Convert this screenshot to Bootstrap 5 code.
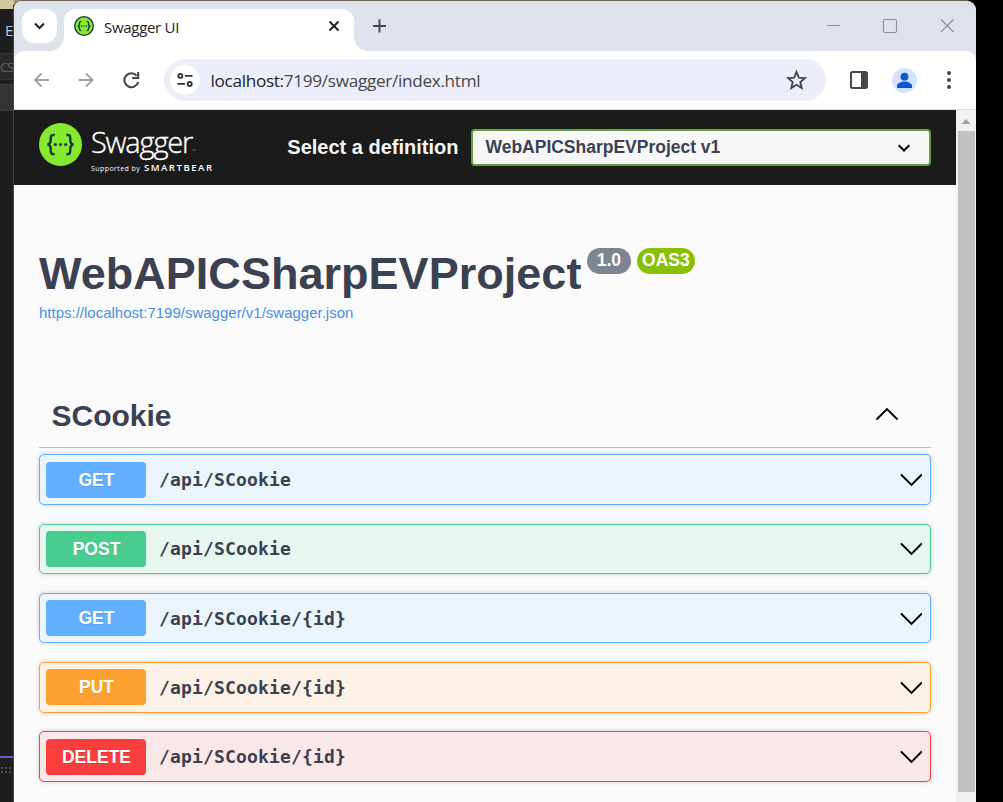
<!DOCTYPE html>
<html lang="en">
<head>
<meta charset="utf-8">
<title>Swagger UI</title>
<link href="https://cdn.jsdelivr.net/npm/bootstrap@5.3.0/dist/css/bootstrap.min.css" rel="stylesheet">
<style>
body{width:1003px;height:802px;font-family:"Liberation Sans",Arial,sans-serif;color:#3b4151}
svg{display:block;flex:none}
.editor-strip{width:13px;background:#1e1e1e;font-family:"Open Sans",sans-serif;white-space:nowrap}
.desk{height:9px;background:#d0c89f}
.menu-letter{height:44px;padding:9px 0 0 5px;font-size:15px;line-height:24px;color:#b9cbe4}
.tool-cell{height:27px;background:#2a2a2a;border-top:1px solid #383838;border-bottom:1px solid #383838;color:#606060;font-size:13.5px;letter-spacing:-1.6px;line-height:26px}
.tab-cell{height:27px;margin-top:4px;background:#333;border-top:1px solid #3f3f3f;border-bottom:1px solid #3f3f3f}
.status-line{height:2px;margin-top:645px;background:#6a5acd}
.status-dots{height:7px;margin-top:8px;background:radial-gradient(circle,#4b4b4b 34%,transparent 38%) 0 0/4px 4px}
.browser{width:963px;border-left:1px solid #454545;border-top:1px solid #6b6152;border-radius:9px 10px 0 0;background:#fff}
.top-edge{background:linear-gradient(90deg,#d0c89f 0,#d0c89f 14px,#a2946c 14px,#a2946c 594px,#2b2228 594px,#2b2228 960px,#000 960px) 0 0/100% 5px no-repeat #000}
.tabstrip{height:50px;background:#dee2ea;padding:8px 0 0 8px}
.tab-search{width:35px;height:34px;border-radius:12px;background:#fff}
.page-tab{width:290px;height:42px;margin-left:7px;padding:0 13px 6px 10px;background:#fff;border-radius:12px 12px 0 0}
.flare::before,.flare::after{content:"";position:absolute;bottom:0;width:14px;height:14px}
.flare::before{left:-14px;background:radial-gradient(circle at 0 0,transparent 13.5px,#fff 14px)}
.flare::after{right:-14px;background:radial-gradient(circle at 100% 0,transparent 13.5px,#fff 14px)}
.tab-name{margin:-1px 0 0 10px;font:15px/20px "Open Sans",sans-serif;color:#1f1f1f;letter-spacing:-.3px}
.addressbar{height:59px;background:#dee2ea}
.addressbar-in{background:#fff;border-radius:10px 10px 0 0;border-bottom:1px solid #dfe1e6;padding:0 18px 0 19px}
.omnibox{width:662px;height:42px;border-radius:21px;background:#ebeef8;margin-left:24px;padding:0 19px 0 6px}
.site-info{width:30px;height:30px;border-radius:50%;background:#fff}
.url{font:17.2px/24px "Open Sans",sans-serif;color:#474747;margin-left:10.5px;padding-top:2px;letter-spacing:-.32px;white-space:nowrap}
.url span{color:#1f1f1f}
.page-view{width:942px;background:#fafafa}
.scroller{width:20px;background:#f1f1f1}
.thumb{width:17px;height:661px;background:#c1c1c1;margin-left:1px}
.topbar{height:75px;background:#1b1b1b;padding:0 25px}
.brand-name{font:300 29px/30px "Open Sans",sans-serif;color:#fff;letter-spacing:-1.2px;-webkit-text-stroke:.35px #fff}
.brand-name span{font-size:5px;letter-spacing:0;color:#999;-webkit-text-stroke:0}
.brand-sub{font:7px/10px "Open Sans",sans-serif;color:#fff;white-space:nowrap;letter-spacing:.42px;margin-top:-3px}
.brand-sub b{font-size:9.600px;letter-spacing:1.5px;font-weight:600;margin-left:1.5px}
.def-label{font-size:20px;font-weight:700;color:#f5f5f5;line-height:24px;white-space:nowrap;padding-bottom:2px}
.def-select{width:460px;height:37px;border:2px solid #62a03f;border-radius:4px;background:#f7f7f7;font-size:17.5px;font-weight:700;padding:0 19px 0 12.5px}
.def-select span{letter-spacing:-.01px}
.api-title{font-size:45px;line-height:52px;font-weight:700;letter-spacing:.03px}
.pill{height:26px;border-radius:13px;color:#fff;font-size:17.5px;font-weight:700;line-height:25px;text-align:center}
.json-link{font-size:15px;line-height:18px;color:#4990e2;text-decoration:none}
.tag-head{height:63px;border-bottom:1px solid #bfc1c5;margin-bottom:6.4px;padding:0 32.500px 0 12.5px}
.tag-name{font-size:30px;font-weight:700;line-height:36px}
.op{height:50.5px;margin-bottom:18.75px;border:1px solid var(--c);background:var(--b);border-radius:5px;box-shadow:0 0 4px rgba(0,0,0,.19);padding:0 8px 0 6px}
.op-get{--c:#61affe;--b:#ebf3fb}
.op-post{--c:#49cc90;--b:#e8f6f0}
.op-put{--c:#fca130;--b:#fbf1e6}
.op-delete{--c:#f93e3e;--b:#fae7e7}
.verb{width:100px;height:36px;border-radius:4px;background:var(--c);color:#fff;font-size:17.5px;font-weight:700;line-height:36px;text-align:center;text-shadow:0 1px 0 rgba(0,0,0,.1);padding-left:1px}
.route{font:700 18px/24px "DejaVu Sans Mono",monospace;letter-spacing:.163px;margin-left:13px;padding-top:.9px}
.chev{margin-top:2px}
</style>
</head>
<body class="d-flex overflow-hidden top-edge">
<aside class="editor-strip overflow-hidden flex-shrink-0">
  <div class="desk"></div>
  <div class="menu-letter">E</div>
  <div class="tool-cell">CS</div>
  <div class="tab-cell"></div>
  <div class="status-line"></div>
  <div class="status-dots"></div>
</aside>
<div class="browser d-flex flex-column flex-shrink-0 overflow-hidden">
  <div class="tabstrip d-flex flex-shrink-0">
    <div class="tab-search d-flex align-items-center justify-content-center">
      <svg width="12" height="8" viewBox="0 0 12 8" fill="none" stroke="#1f1f1f" stroke-width="2"><path d="M1 1.500 5.500 6 10 1.500"/></svg>
    </div>
    <div class="page-tab flare position-relative d-flex align-items-center">
      <svg style="margin-top:-2px" width="20" height="20" viewBox="0 0 44 44"><circle cx="22" cy="22" r="20.500" fill="#85ea2d" stroke="#173647" stroke-width="3"/><g fill="none" stroke="#173647" stroke-width="3"><path d="M16 12c-4 0-4 1-4 5 0 3-1 5-4 5 3 0 4 2 4 5 0 4 0 5 4 5M28 12c4 0 4 1 4 5 0 3 1 5 4 5-3 0-4 2-4 5 0 4 0 5-4 5"/></g><g fill="#173647"><circle cx="16.500" cy="22" r="1.800"/><circle cx="22" cy="22" r="1.800"/><circle cx="27.500" cy="22" r="1.800"/></g></svg>
      <span class="tab-name">Swagger UI</span>
      <svg class="ms-auto" style="margin-top:-2px" width="14" height="14" viewBox="0 0 14 14" stroke="#1f1f1f" stroke-width="1.900"><path d="m2.500 2.500 9 9M11.500 2.500l-9 9"/></svg>
    </div>
    <svg class="ms-3" style="margin-top:10px" width="18" height="14" viewBox="0 0 18 14" stroke="#474747" stroke-width="1.900"><path d="M3 7h13M9.500 .5v13"/></svg>
    <svg class="ms-auto me-3" width="138" height="34" viewBox="0 0 138 34" fill="none" stroke="#8b8e93" stroke-width="1.100"><path d="M5 16.500h13M119 10.500l12.500 12.500M131.500 10.500 119 23"/><rect x="61.500" y="10.500" width="13" height="13" rx="1.500"/></svg>
  </div>
  <div class="addressbar flex-shrink-0">
    <div class="addressbar-in h-100 d-flex align-items-center">
      <svg width="18" height="16" viewBox="0 0 18 16" fill="none" stroke="#a2a2a2" stroke-width="1.900"><path d="M16 8H2.500M8.500 1.500 2 8l6.500 6.500"/></svg>
      <svg style="margin-left:26px" width="18" height="16" viewBox="0 0 18 16" fill="none" stroke="#a2a2a2" stroke-width="1.900"><path d="M1.500 8H15M9 1.500 15.500 8 9 14.500"/></svg>
      <svg style="margin-left:27px" width="18" height="18" viewBox="0 0 18 18" fill="none" stroke="#474747" stroke-width="2.100"><path d="M14.700 4.600A7 7 0 1 0 16.200 11M16.200 1v6h-6"/></svg>
      <div class="omnibox d-flex align-items-center">
        <div class="site-info d-flex align-items-center justify-content-center">
          <svg width="16" height="14" viewBox="0 0 16 14" fill="none" stroke="#303030" stroke-width="1.900"><circle cx="3.300" cy="2.900" r="2"/><path d="M8 2.900h7.500M.5 10.900h7.500"/><circle cx="12.700" cy="10.900" r="2"/></svg>
        </div>
        <div class="url"><span>localhost:</span>7199/swagger/index.html</div>
        <svg class="ms-auto" width="22" height="22" viewBox="0 0 22 22" fill="none" stroke="#474747" stroke-width="1.900"><path d="m11.500 3 2.300 5.600 6.100.5-4.600 4 1.400 5.900-5.200-3.200L6.300 19l1.400-5.900-4.600-4 6.100-.5z"/></svg>
      </div>
      <svg style="margin-left:24px" width="18" height="18" viewBox="0 0 18 18"><rect x="1" y="1" width="16" height="16" rx="1.500" fill="none" stroke="#474747" stroke-width="2"/><path fill="#474747" d="M11 1h6v16h-6z"/></svg>
      <svg style="margin-left:24px" width="25" height="25" viewBox="0 0 25 25"><circle cx="12.500" cy="12.500" r="12.500" fill="#d3e3fd"/><g fill="#0b57d0"><circle cx="12.500" cy="8.700" r="3.900"/><path d="M5 20v-2c0-3 4.500-4.500 7.500-4.500S20 15 20 18v2z"/></g></svg>
      <svg class="ms-auto" style="margin-right:7px" width="4" height="18" viewBox="0 0 4 18" fill="#474747"><circle cx="2" cy="2" r="2"/><circle cx="2" cy="9" r="2"/><circle cx="2" cy="16" r="2"/></svg>
    </div>
  </div>
  <div class="d-flex flex-grow-1">
    <main class="page-view flex-shrink-0">
      <header class="topbar d-flex align-items-center">
        <svg style="margin-top:-6px" width="43" height="43" viewBox="0 0 44 44"><circle cx="22" cy="22" r="22" fill="#85ea2d"/><g fill="none" stroke="#173647" stroke-width="2.500"><path d="M16 12c-4 0-4 1-4 5 0 3-1 5-3.500 5 2.500 0 3.500 2 3.500 5 0 4 0 5 4 5M28 12c4 0 4 1 4 5 0 3 1 5 3.500 5-2.500 0-3.500 2-3.500 5 0 4 0 5-4 5"/></g><g fill="#173647"><circle cx="16.700" cy="22" r="1.600"/><circle cx="22" cy="22" r="1.600"/><circle cx="27.300" cy="22" r="1.600"/></g></svg>
        <div style="margin-left:9px;margin-top:6px">
          <div class="brand-name">Swagger<span>™</span></div>
          <div class="brand-sub">Supported by <b>SMARTBEAR</b></div>
        </div>
        <div class="def-label ms-auto">Select a definition</div>
        <div class="def-select d-flex align-items-center justify-content-between flex-shrink-0" style="margin-left:12.5px">
          <span>WebAPICSharpEVProject v1</span>
          <svg width="12" height="8" viewBox="0 0 12 8" fill="none" stroke="#000" stroke-width="2"><path d="M.7 1.200 6 6.500l5.300-5.300"/></svg>
        </div>
      </header>
      <div style="padding:63px 25px 0">
        <div class="d-flex">
          <h1 class="api-title m-0">WebAPICSharpEVProject</h1>
          <span class="pill" style="width:44px;margin-left:5.500px;background:#7d8492">1.0</span>
          <span class="pill" style="width:58px;margin-left:6px;background:#89bf04">OAS3</span>
        </div>
        <div style="margin-top:4px;height:81px;line-height:18px"><a class="json-link" href="#">https://localhost:7199/swagger/v1/swagger.json</a></div>
        <div class="tag-head d-flex align-items-center justify-content-between">
          <span class="tag-name">SCookie</span>
          <svg style="margin-top:-5px" width="24" height="14" viewBox="0 0 24 14" fill="none" stroke="#000" stroke-width="1.900" stroke-linecap="round"><path d="M2 12 12 2l10 10"/></svg>
        </div>
        <div class="op op-get d-flex align-items-center"><span class="verb">GET</span><span class="route">/api/SCookie</span><svg class="chev ms-auto" width="22" height="13" viewBox="0 0 22 13" fill="none" stroke="#000" stroke-width="1.900" stroke-linecap="round"><path d="m1.500 1 10 10L21.300 1"/></svg></div>
        <div class="op op-post d-flex align-items-center"><span class="verb">POST</span><span class="route">/api/SCookie</span><svg class="chev ms-auto" width="22" height="13" viewBox="0 0 22 13" fill="none" stroke="#000" stroke-width="1.900" stroke-linecap="round"><path d="m1.500 1 10 10L21.300 1"/></svg></div>
        <div class="op op-get d-flex align-items-center"><span class="verb">GET</span><span class="route">/api/SCookie/{id}</span><svg class="chev ms-auto" width="22" height="13" viewBox="0 0 22 13" fill="none" stroke="#000" stroke-width="1.900" stroke-linecap="round"><path d="m1.500 1 10 10L21.300 1"/></svg></div>
        <div class="op op-put d-flex align-items-center"><span class="verb">PUT</span><span class="route">/api/SCookie/{id}</span><svg class="chev ms-auto" width="22" height="13" viewBox="0 0 22 13" fill="none" stroke="#000" stroke-width="1.900" stroke-linecap="round"><path d="m1.500 1 10 10L21.300 1"/></svg></div>
        <div class="op op-delete d-flex align-items-center mb-0"><span class="verb">DELETE</span><span class="route">/api/SCookie/{id}</span><svg class="chev ms-auto" width="22" height="13" viewBox="0 0 22 13" fill="none" stroke="#000" stroke-width="1.900" stroke-linecap="round"><path d="m1.500 1 10 10L21.300 1"/></svg></div>
      </div>
    </main>
    <div class="scroller d-flex flex-column align-items-center">
      <svg width="18" height="21" viewBox="0 0 18 21"><path d="M4.500 14 9 9l4.500 5z" fill="#a3a3a3"/></svg>
      <div class="thumb"></div>
    </div>
  </div>
</div>
<script src="https://cdn.jsdelivr.net/npm/bootstrap@5.3.0/dist/js/bootstrap.bundle.min.js"></script>
</body>
</html>
